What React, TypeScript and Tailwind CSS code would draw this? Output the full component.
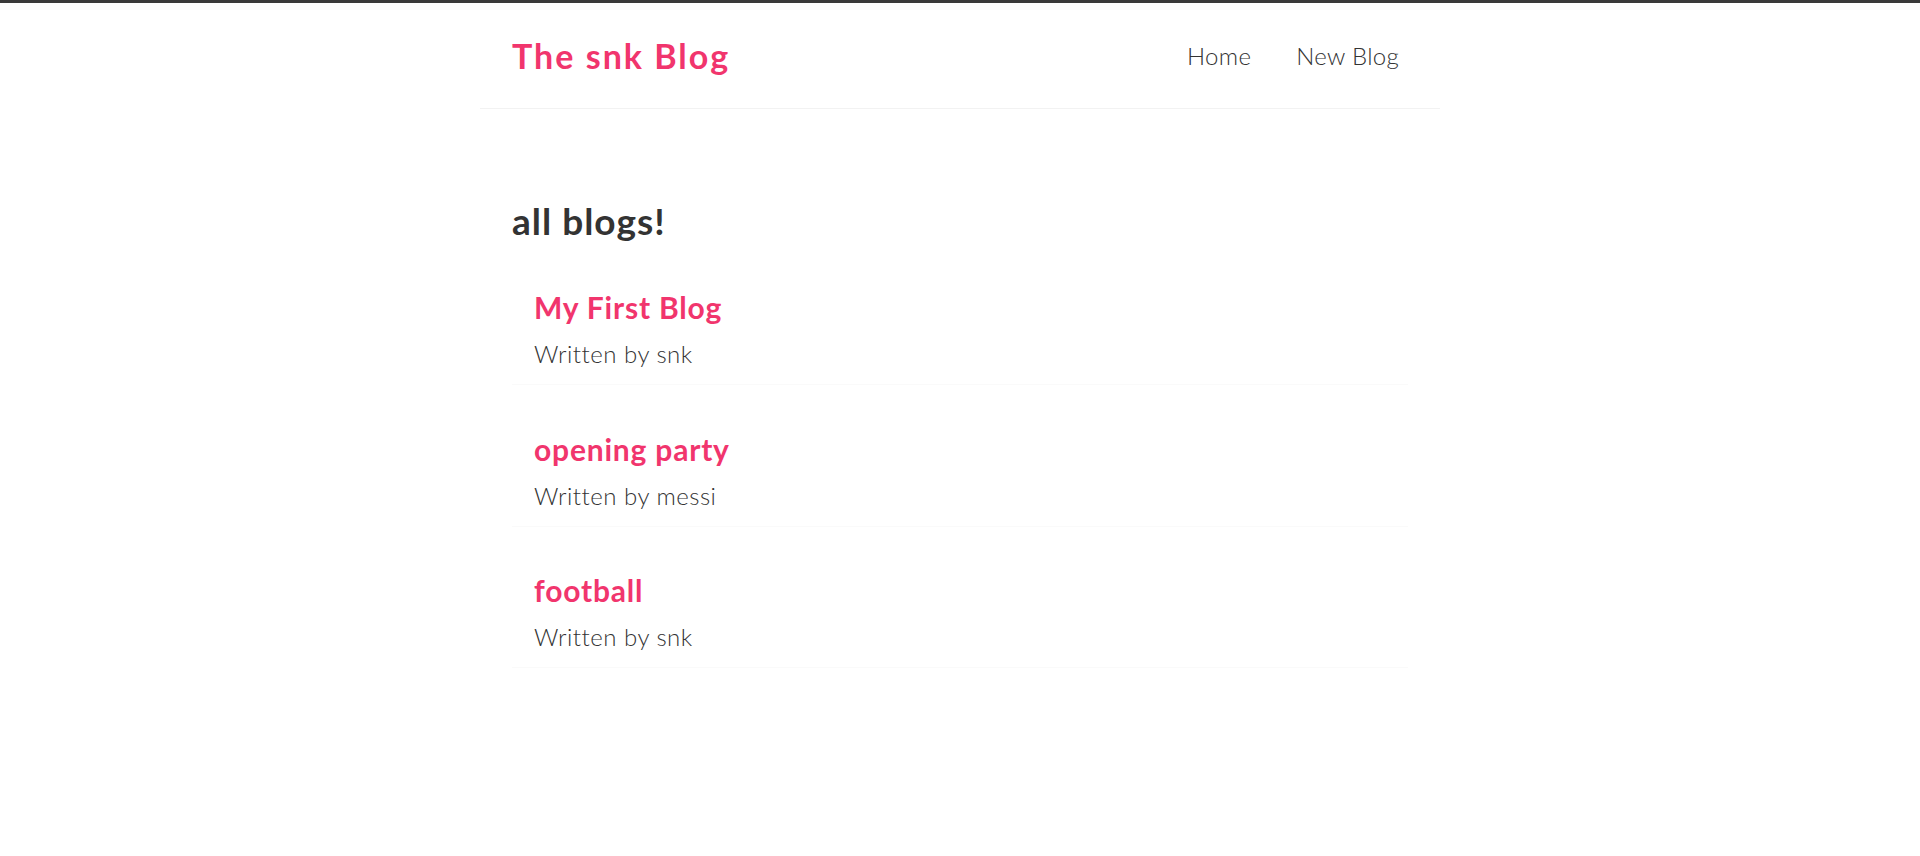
import React from "react";

const blogs = [
  { id: 1, title: "My First Blog", author: "snk" },
  { id: 2, title: "opening party", author: "messi" },
  { id: 3, title: "football", author: "snk" },
];

const Navbar = () => {
  return (
    <nav className="mx-auto flex h-[106px] w-[960px] items-center border-b border-[#f2f2f2] px-8">
      <h1 className="text-[34px] font-bold leading-none tracking-[2px] text-[#f1356d]">The snk Blog</h1>
      <div className="ml-auto mr-[9px] flex items-center gap-[45px]">
        <a href="/" className="text-[24px] font-light leading-none tracking-[0.3px] text-[#333] no-underline">
          Home
        </a>
        <a href="/create" className="text-[24px] font-light leading-none tracking-[0.3px] text-[#333] no-underline">
          New Blog
        </a>
      </div>
    </nav>
  );
};

const BlogList = () => {
  return (
    <div className="mt-[30px] flex flex-col gap-[29.5px]">
      {blogs.map((blog) => (
        <div key={blog.id} className="border-b border-[#fafafa] px-[22px] pb-[15px] pt-[16px]">
          <h2 className="text-[30px] font-bold leading-[36px] tracking-[0.8px] text-[#f1356d]">{blog.title}</h2>
          <p className="mt-[14px] text-[24px] font-light leading-[30px] tracking-[0.5px] text-[#333]">
            Written by {blog.author}
          </p>
        </div>
      ))}
    </div>
  );
};

export default function App() {
  return (
    <div className="min-h-[856px] bg-white font-['Lato',sans-serif] text-[#333]">
      <div className="h-[3px] bg-[#3a3a3a]" />
      <Navbar />
      <div className="mx-auto w-[960px] px-8 pt-[90px]">
        <h2 className="text-[37px] font-bold leading-[44px] tracking-[1px] text-[#333]">all blogs!</h2>
        <BlogList />
      </div>
    </div>
  );
}
